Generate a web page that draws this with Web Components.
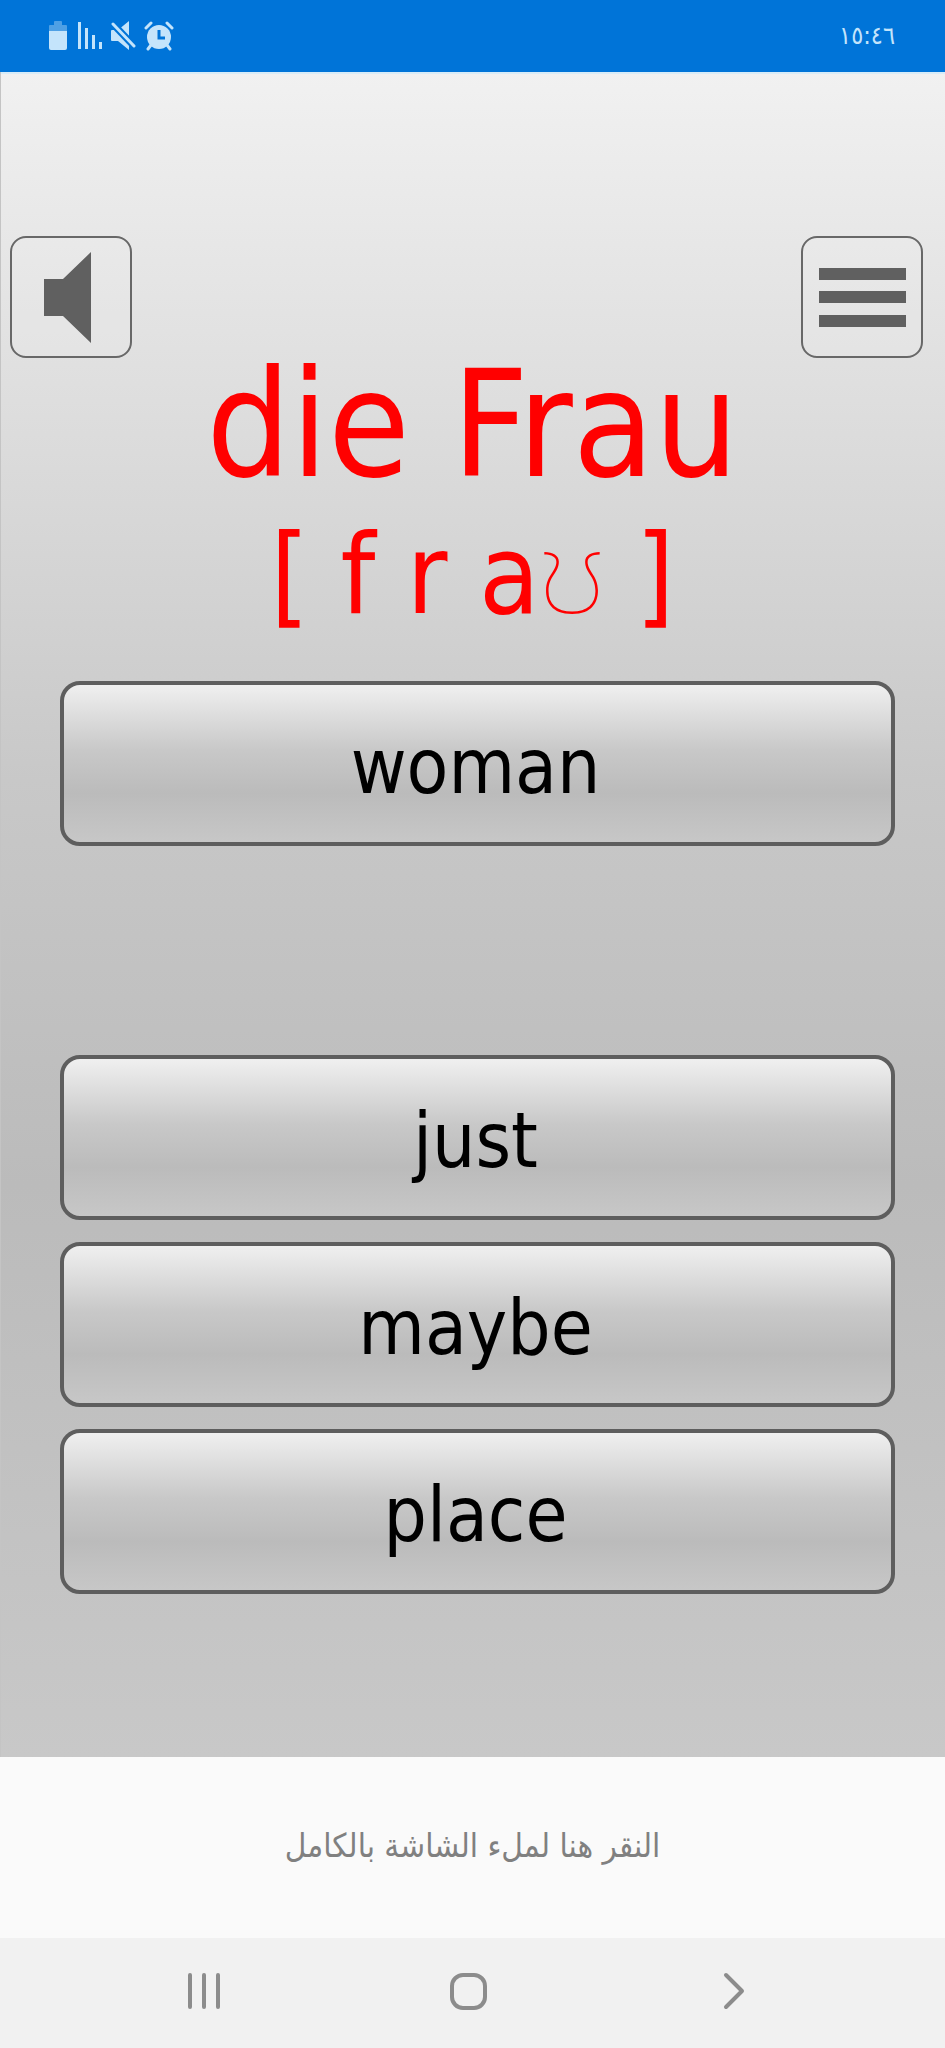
<!DOCTYPE html>
<html lang="ar">
<head>
<meta charset="utf-8">
<meta name="viewport" content="width=device-width, initial-scale=1">
<title>die Frau</title>
<style>
  body {
    margin: 0;
    font-family: "DejaVu Sans Condensed", "DejaVu Sans", sans-serif;
  }
</style>
</head>
<body>
<vocab-app></vocab-app>

<script>
// status bar
const statusTemplate = document.createElement('template');
statusTemplate.innerHTML = `
  <style>
    :host {
      display: flex;
      align-items: center;
      justify-content: space-between;
      height: 72px;
      padding: 0 50px 0 48px;
      background-color: #0074d8;
      color: #c4e4fb;
    }

    .icons {
      display: flex;
      align-items: center;
      gap: 8px;
    }

    svg {
      display: block;
      fill: currentColor;
    }

    time {
      font-size: 25px;
      line-height: 32px;
    }
  </style>

  <div class="icons">
    <svg width="20" height="30" viewBox="0 0 20 30">
      <path opacity=".4" d="M1 11V5q0-1 1-1h4V1q0-1 1-1h6q1 0 1 1v3h4q1 0 1 1v6z"/>
      <path d="M1 10h18v17q0 2-2 2H3q-2 0-2-2z"/>
    </svg>
    <svg width="26" height="30" viewBox="0 0 26 30">
      <path d="M2 1h3v27H2zM9 7h3v21H9zM16 14h3v14h-3zM23 21h3v7h-3z"/>
    </svg>
    <svg width="26" height="30" viewBox="0 0 26 30">
      <path d="M2 9h6L19 0v29L8 20H2q-1 0-1-1v-9q0-1 1-1z"/>
      <path d="M3 3l21 22" fill="none" stroke="#0074d8" stroke-width="7"/>
      <path d="M3 3l21 22" fill="none" stroke="currentColor" stroke-width="3" stroke-linecap="round"/>
    </svg>
    <svg width="30" height="30" viewBox="0 0 30 30">
      <circle cx="15" cy="16" r="12"/>
      <path d="M2 7l5-5M23 2l5 5M7 24l-3 4M23 24l3 4" fill="none" stroke="currentColor" stroke-width="3" stroke-linecap="round"/>
      <path d="M15 9v8h6" fill="none" stroke="#0074d8" stroke-width="3"/>
    </svg>
  </div>
  <time dir="ltr" datetime="15:46"><bdo dir="ltr">١٥:٤٦</bdo></time>
`;

class StatusBar extends HTMLElement {
  constructor() {
    super();
    this.attachShadow({ mode: 'open' });
    this.shadowRoot.appendChild(statusTemplate.content.cloneNode(true));
  }
}

// square outlined button, icon comes through the slot
const toolTemplate = document.createElement('template');
toolTemplate.innerHTML = `
  <style>
    :host {
      display: block;
    }

    button {
      display: block;
      box-sizing: border-box;
      width: 122px;
      height: 122px;
      padding: 0;
      border: 2px solid #686868;
      border-radius: 16px;
      background-color: rgba(255, 255, 255, .1);
      color: #606060;
      cursor: pointer;
    }
  </style>

  <button type="button"><slot></slot></button>
`;

class ToolButton extends HTMLElement {
  constructor() {
    super();
    this.attachShadow({ mode: 'open' });
    this.shadowRoot.appendChild(toolTemplate.content.cloneNode(true));
  }

  connectedCallback() {
    this.shadowRoot.querySelector('button').setAttribute('aria-label', this.getAttribute('label'));
  }
}

// answer button
const answerTemplate = document.createElement('template');
answerTemplate.innerHTML = `
  <style>
    :host {
      display: block;
    }

    button {
      display: block;
      box-sizing: border-box;
      width: 100%;
      height: 165px;
      padding: 6px 4px 0 0;
      border: 4px solid #5e5e5e;
      border-radius: 20px;
      background: linear-gradient(#f2f2f2, #c8c8c8 42%, #bbbbbb 68%, #c8c8c8);
      background-origin: border-box;
      color: #000;
      font-family: inherit;
      font-size: 76px;
      line-height: 100px;
      cursor: pointer;
    }
  </style>

  <button type="button"><slot></slot></button>
`;

class AnswerButton extends HTMLElement {
  constructor() {
    super();
    this.attachShadow({ mode: 'open' });
    this.shadowRoot.appendChild(answerTemplate.content.cloneNode(true));
  }
}

// word with its transcription
const wordTemplate = document.createElement('template');
wordTemplate.innerHTML = `
  <style>
    :host {
      display: block;
      text-align: center;
      color: #f00;
    }

    h1, p {
      margin: 0;
      font-weight: 400;
    }

    h1 {
      font-size: 148px;
      line-height: 134px;
    }

    p {
      font-size: 110px;
      line-height: 167px;
    }
  </style>

  <h1><slot name="word"></slot></h1>
  <p><slot name="sound"></slot></p>
`;

class WordCard extends HTMLElement {
  constructor() {
    super();
    this.attachShadow({ mode: 'open' });
    this.shadowRoot.appendChild(wordTemplate.content.cloneNode(true));
  }
}

// android navigation
const navTemplate = document.createElement('template');
navTemplate.innerHTML = `
  <style>
    :host {
      display: block;
      background-color: #f1f1f1;
    }

    nav {
      display: flex;
      height: 106px;
      padding: 0 80px 4px 72px;
    }

    button {
      flex: 1;
      display: flex;
      align-items: center;
      justify-content: center;
      padding: 0;
      border: 0;
      background: none;
      color: #8c8c8c;
    }

    svg {
      fill: none;
      stroke: currentColor;
      stroke-width: 4;
      stroke-linecap: round;
      stroke-linejoin: round;
    }
  </style>

  <nav>
    <button type="button" aria-label="Recents">
      <svg width="40" height="40" viewBox="0 0 40 40"><path d="M6 4v32M20 4v32M34 4v32"/></svg>
    </button>
    <button type="button" aria-label="Home">
      <svg width="40" height="40" viewBox="0 0 40 40"><rect x="4" y="4" width="33" height="33" rx="11"/></svg>
    </button>
    <button type="button" aria-label="Back">
      <svg width="40" height="40" viewBox="0 0 40 40"><path d="M13 4l16 16-16 16"/></svg>
    </button>
  </nav>
`;

class NavBar extends HTMLElement {
  constructor() {
    super();
    this.attachShadow({ mode: 'open' });
    this.shadowRoot.appendChild(navTemplate.content.cloneNode(true));
  }
}

// whole screen
const appTemplate = document.createElement('template');
appTemplate.innerHTML = `
  <style>
    :host {
      display: flex;
      flex-direction: column;
      min-height: 100vh;
    }

    main {
      flex: 1;
      box-sizing: border-box;
      padding: 164px 0 60px;
      background: linear-gradient(#f1f1f1, #c8c8c8 42%, #bbbbbb 66%, #c8c8c8);
      box-shadow: inset 1px 0 #c4c4c4, inset 0 2px #d8ecf8;
    }

    .tools {
      display: flex;
      justify-content: space-between;
      padding: 0 22px 0 10px;
    }

    svg {
      display: block;
      fill: currentColor;
    }

    .thin {
      font-family: Inter, sans-serif;
      font-weight: 100;
      line-height: 1;
    }

    .answers {
      display: flex;
      flex-direction: column;
      gap: 22px;
      padding: 22px 50px 0 60px;
    }

    /* empty row between the chosen answer and the rest */
    .blank {
      height: 165px;
    }

    .fullscreen {
      height: 181px;
      padding-bottom: 4px;
      border: 0;
      background-color: #fafafa;
      color: #808080;
      font-family: inherit;
      font-size: 33px;
      line-height: 48px;
    }
  </style>

  <status-bar></status-bar>
  <main lang="de">
    <div class="tools">
      <tool-button label="Sound">
        <svg width="118" height="118" viewBox="2 2 118 118"><path d="M34 43h19l28-27v91L53 80H34z"/></svg>
      </tool-button>
      <tool-button label="Menu">
        <svg width="118" height="118" viewBox="2 2 118 118"><path d="M18 32h87v12H18zM18 55h87v12H18zM18 79h87v12H18z"/></svg>
      </tool-button>
    </div>
    <word-card>
      <span slot="word">die Frau</span>
      <span slot="sound">[ f r a<span class="thin">ʊ</span> ]</span>
    </word-card>
    <div class="answers">
      <answer-button>woman</answer-button>
      <div class="blank"></div>
      <answer-button>just</answer-button>
      <answer-button>maybe</answer-button>
      <answer-button>place</answer-button>
    </div>
  </main>
  <button type="button" class="fullscreen" dir="rtl">النقر هنا لملء الشاشة بالكامل</button>
  <nav-bar></nav-bar>
`;

class VocabApp extends HTMLElement {
  constructor() {
    super();
    this.attachShadow({ mode: 'open' });
    this.shadowRoot.appendChild(appTemplate.content.cloneNode(true));
  }
}

window.customElements.define('status-bar', StatusBar);
window.customElements.define('tool-button', ToolButton);
window.customElements.define('answer-button', AnswerButton);
window.customElements.define('word-card', WordCard);
window.customElements.define('nav-bar', NavBar);
window.customElements.define('vocab-app', VocabApp);
</script>
</body>
</html>
